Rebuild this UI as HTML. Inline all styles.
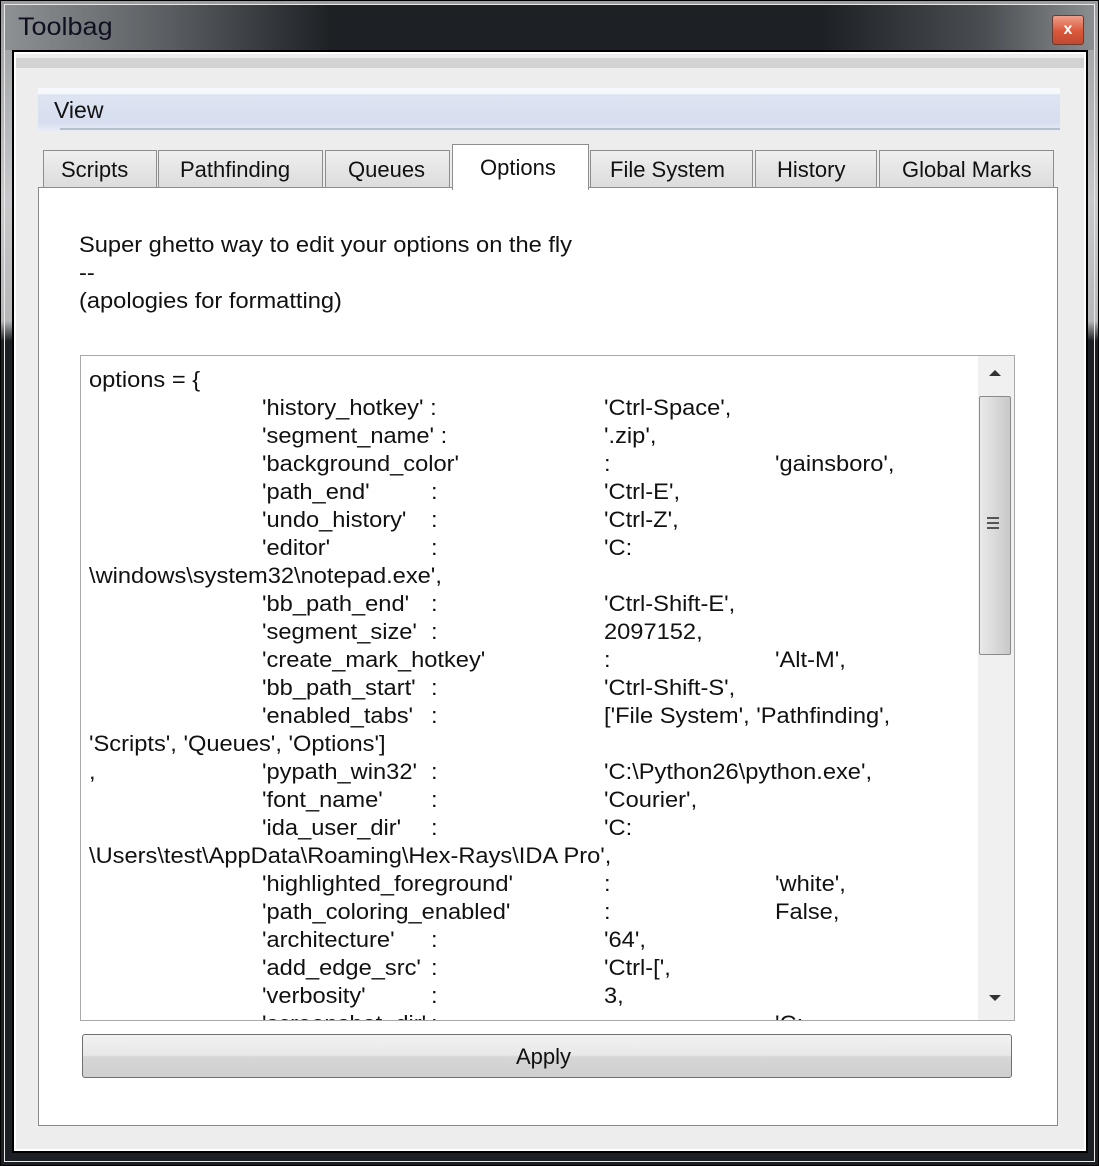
<!DOCTYPE html>
<html><head><meta charset="utf-8"><style>
*{margin:0;padding:0;box-sizing:border-box}
body{width:1099px;height:1166px;position:relative;overflow:hidden;background:#1b1e22;font-family:"Liberation Sans",sans-serif;color:#111}
.a{position:absolute}
.t{position:absolute;white-space:pre;font-size:21px;line-height:28px}
.s{font-size:22px;transform:scaleX(1.075);transform-origin:0 50%}
</style></head><body>
<div class="a" style="left:0;top:0;width:1099px;height:1166px;border:1px solid #000;background:linear-gradient(180deg,#9a9d9f 0px,#c7c9ca 200px,#b5b7b8 320px,#1c1f23 340px,#1c1f23 100%)"></div>
<div class="a" style="left:4px;top:4px;width:1091px;height:1158px;border:1px solid #e8e8e8"></div>
<div class="a" style="left:5px;top:5px;width:1089px;height:45px;background:linear-gradient(90deg,#8d9193 0%,#5a5e62 15%,#1d2024 30%,#1d2024 75%,#4a4e52 90%,#8a8e90 100%)"></div>
<div class="t" style="left:18px;top:13px;font-size:25px;color:#101020;transform:scaleX(1.08);transform-origin:0 50%">Toolbag</div>
<div class="a" style="left:1052px;top:15px;width:32px;height:30px;border:1px solid #6b3a30;border-radius:3px;background:linear-gradient(180deg,#eea08a,#d9573a 55%,#c04a30);color:#fff;font-size:16px;font-weight:bold;text-align:center;line-height:28px">x</div>
<div class="a" style="left:12px;top:50px;width:1076px;height:1103px;background:#000"></div>
<div class="a" style="left:14px;top:52px;width:1072px;height:1099px;background:#fff"></div>
<div class="a" style="left:16px;top:54px;width:1068px;height:1095px;background:#ededed"></div>
<div class="a" style="left:16px;top:58px;width:1068px;height:10px;background:#d3d3d3"></div>
<div class="a" style="left:38px;top:88px;width:1022px;height:43px;background:linear-gradient(180deg,#f7f8fb 0,#f7f8fb 14%,#dde4f1 15%,#d6def0 80%,#e8ecf5 100%)"></div>
<div class="a" style="left:60px;top:128px;width:1000px;height:2px;background:#b8bfcc"></div>
<div class="t" style="left:54px;top:96px;font-size:23px">View</div>
<div class="a" style="left:38px;top:187px;width:1020px;height:939px;background:#fff;border:1px solid #8a8a8a"></div>
<div class="a" style="left:43px;top:150px;width:114px;height:38px;border:1px solid #8d8d8d;background:linear-gradient(#efefef,#dcdcdc)"></div>
<div class="t" style="left:61px;top:156px;font-size:22px">Scripts</div>
<div class="a" style="left:158px;top:150px;width:165px;height:38px;border:1px solid #8d8d8d;background:linear-gradient(#efefef,#dcdcdc)"></div>
<div class="t" style="left:180px;top:156px;font-size:22px">Pathfinding</div>
<div class="a" style="left:325px;top:150px;width:125px;height:38px;border:1px solid #8d8d8d;background:linear-gradient(#efefef,#dcdcdc)"></div>
<div class="t" style="left:348px;top:156px;font-size:22px">Queues</div>
<div class="a" style="left:590px;top:150px;width:163px;height:38px;border:1px solid #8d8d8d;background:linear-gradient(#efefef,#dcdcdc)"></div>
<div class="t" style="left:610px;top:156px;font-size:22px">File System</div>
<div class="a" style="left:755px;top:150px;width:122px;height:38px;border:1px solid #8d8d8d;background:linear-gradient(#efefef,#dcdcdc)"></div>
<div class="t" style="left:777px;top:156px;font-size:22px">History</div>
<div class="a" style="left:879px;top:150px;width:175px;height:38px;border:1px solid #8d8d8d;background:linear-gradient(#efefef,#dcdcdc)"></div>
<div class="t" style="left:902px;top:156px;font-size:22px">Global Marks</div>
<div class="a" style="left:452px;top:144px;width:137px;height:46px;border:1px solid #8d8d8d;border-bottom:none;background:#fff"></div>
<div class="t" style="left:480px;top:154px;font-size:22px">Options</div>
<div class="t s" style="left:79px;top:231px">Super ghetto way to edit your options on the fly</div>
<div class="t s" style="left:79px;top:259px">--</div>
<div class="t s" style="left:79px;top:287px">(apologies for formatting)</div>
<div class="a" style="left:80px;top:355px;width:935px;height:666px;border:1px solid #a9a9a9;background:#fff;overflow:hidden">
<div style="position:absolute;left:-81px;top:-356px;width:1099px;height:1166px">
<div class="t s" style="left:89px;top:366px">options = {</div>
<div class="t s" style="left:262px;top:394px">'history_hotkey' :</div><div class="t s" style="left:604px;top:394px">'Ctrl-Space',</div>
<div class="t s" style="left:262px;top:422px">'segment_name' :</div><div class="t s" style="left:604px;top:422px">'.zip',</div>
<div class="t s" style="left:262px;top:450px">'background_color'</div><div class="t s" style="left:604px;top:450px">:</div><div class="t s" style="left:775px;top:450px">'gainsboro',</div>
<div class="t s" style="left:262px;top:478px">'path_end'</div><div class="t s" style="left:431px;top:478px">:</div><div class="t s" style="left:604px;top:478px">'Ctrl-E',</div>
<div class="t s" style="left:262px;top:506px">'undo_history'</div><div class="t s" style="left:431px;top:506px">:</div><div class="t s" style="left:604px;top:506px">'Ctrl-Z',</div>
<div class="t s" style="left:262px;top:534px">'editor'</div><div class="t s" style="left:431px;top:534px">:</div><div class="t s" style="left:604px;top:534px">'C:</div>
<div class="t s" style="left:89px;top:562px">\windows\system32\notepad.exe',</div>
<div class="t s" style="left:262px;top:590px">'bb_path_end'</div><div class="t s" style="left:431px;top:590px">:</div><div class="t s" style="left:604px;top:590px">'Ctrl-Shift-E',</div>
<div class="t s" style="left:262px;top:618px">'segment_size'</div><div class="t s" style="left:431px;top:618px">:</div><div class="t s" style="left:604px;top:618px">2097152,</div>
<div class="t s" style="left:262px;top:646px">'create_mark_hotkey'</div><div class="t s" style="left:604px;top:646px">:</div><div class="t s" style="left:775px;top:646px">'Alt-M',</div>
<div class="t s" style="left:262px;top:674px">'bb_path_start'</div><div class="t s" style="left:431px;top:674px">:</div><div class="t s" style="left:604px;top:674px">'Ctrl-Shift-S',</div>
<div class="t s" style="left:262px;top:702px">'enabled_tabs'</div><div class="t s" style="left:431px;top:702px">:</div><div class="t s" style="left:604px;top:702px">['File System', 'Pathfinding',</div>
<div class="t s" style="left:89px;top:730px">'Scripts', 'Queues', 'Options']</div>
<div class="t s" style="left:89px;top:758px">,</div><div class="t s" style="left:262px;top:758px">'pypath_win32'</div><div class="t s" style="left:431px;top:758px">:</div><div class="t s" style="left:604px;top:758px">'C:\Python26\python.exe',</div>
<div class="t s" style="left:262px;top:786px">'font_name'</div><div class="t s" style="left:431px;top:786px">:</div><div class="t s" style="left:604px;top:786px">'Courier',</div>
<div class="t s" style="left:262px;top:814px">'ida_user_dir'</div><div class="t s" style="left:431px;top:814px">:</div><div class="t s" style="left:604px;top:814px">'C:</div>
<div class="t s" style="left:89px;top:842px">\Users\test\AppData\Roaming\Hex-Rays\IDA Pro',</div>
<div class="t s" style="left:262px;top:870px">'highlighted_foreground'</div><div class="t s" style="left:604px;top:870px">:</div><div class="t s" style="left:775px;top:870px">'white',</div>
<div class="t s" style="left:262px;top:898px">'path_coloring_enabled'</div><div class="t s" style="left:604px;top:898px">:</div><div class="t s" style="left:775px;top:898px">False,</div>
<div class="t s" style="left:262px;top:926px">'architecture'</div><div class="t s" style="left:431px;top:926px">:</div><div class="t s" style="left:604px;top:926px">'64',</div>
<div class="t s" style="left:262px;top:954px">'add_edge_src'</div><div class="t s" style="left:431px;top:954px">:</div><div class="t s" style="left:604px;top:954px">'Ctrl-[',</div>
<div class="t s" style="left:262px;top:982px">'verbosity'</div><div class="t s" style="left:431px;top:982px">:</div><div class="t s" style="left:604px;top:982px">3,</div>
<div class="t s" style="left:262px;top:1010px">'screenshot_dir'</div><div class="t s" style="left:431px;top:1010px">:</div><div class="t s" style="left:775px;top:1010px">'C:</div>
</div>
<div class="a" style="left:897px;top:0;width:36px;height:664px;background:#f0f0f0"></div>
<div class="a" style="left:908px;top:14px;width:0;height:0;border-left:6px solid transparent;border-right:6px solid transparent;border-bottom:6px solid #333"></div>
<div class="a" style="left:898px;top:40px;width:32px;height:259px;border:1px solid #8b8b8b;border-radius:2px;background:linear-gradient(90deg,#e9e9e9,#d6d6d6 60%,#c8c8c8)"></div>
<div class="a" style="left:906px;top:161px;width:12px;height:2px;background:#555"></div>
<div class="a" style="left:906px;top:166px;width:12px;height:2px;background:#555"></div>
<div class="a" style="left:906px;top:171px;width:12px;height:2px;background:#555"></div>
<div class="a" style="left:908px;top:639px;width:0;height:0;border-left:6px solid transparent;border-right:6px solid transparent;border-top:6px solid #333"></div>
</div>
<div class="a" style="left:82px;top:1034px;width:930px;height:44px;border:1px solid #707070;border-radius:3px;background:linear-gradient(180deg,#f2f2f2 0%,#e8e8e8 48%,#d6d6d6 52%,#cfcfcf 100%)"></div>
<div class="t" style="left:516px;top:1043px;font-size:22px">Apply</div>
<div class="a" style="left:12px;top:1151px;width:1076px;height:2px;background:#000"></div>
</body></html>
